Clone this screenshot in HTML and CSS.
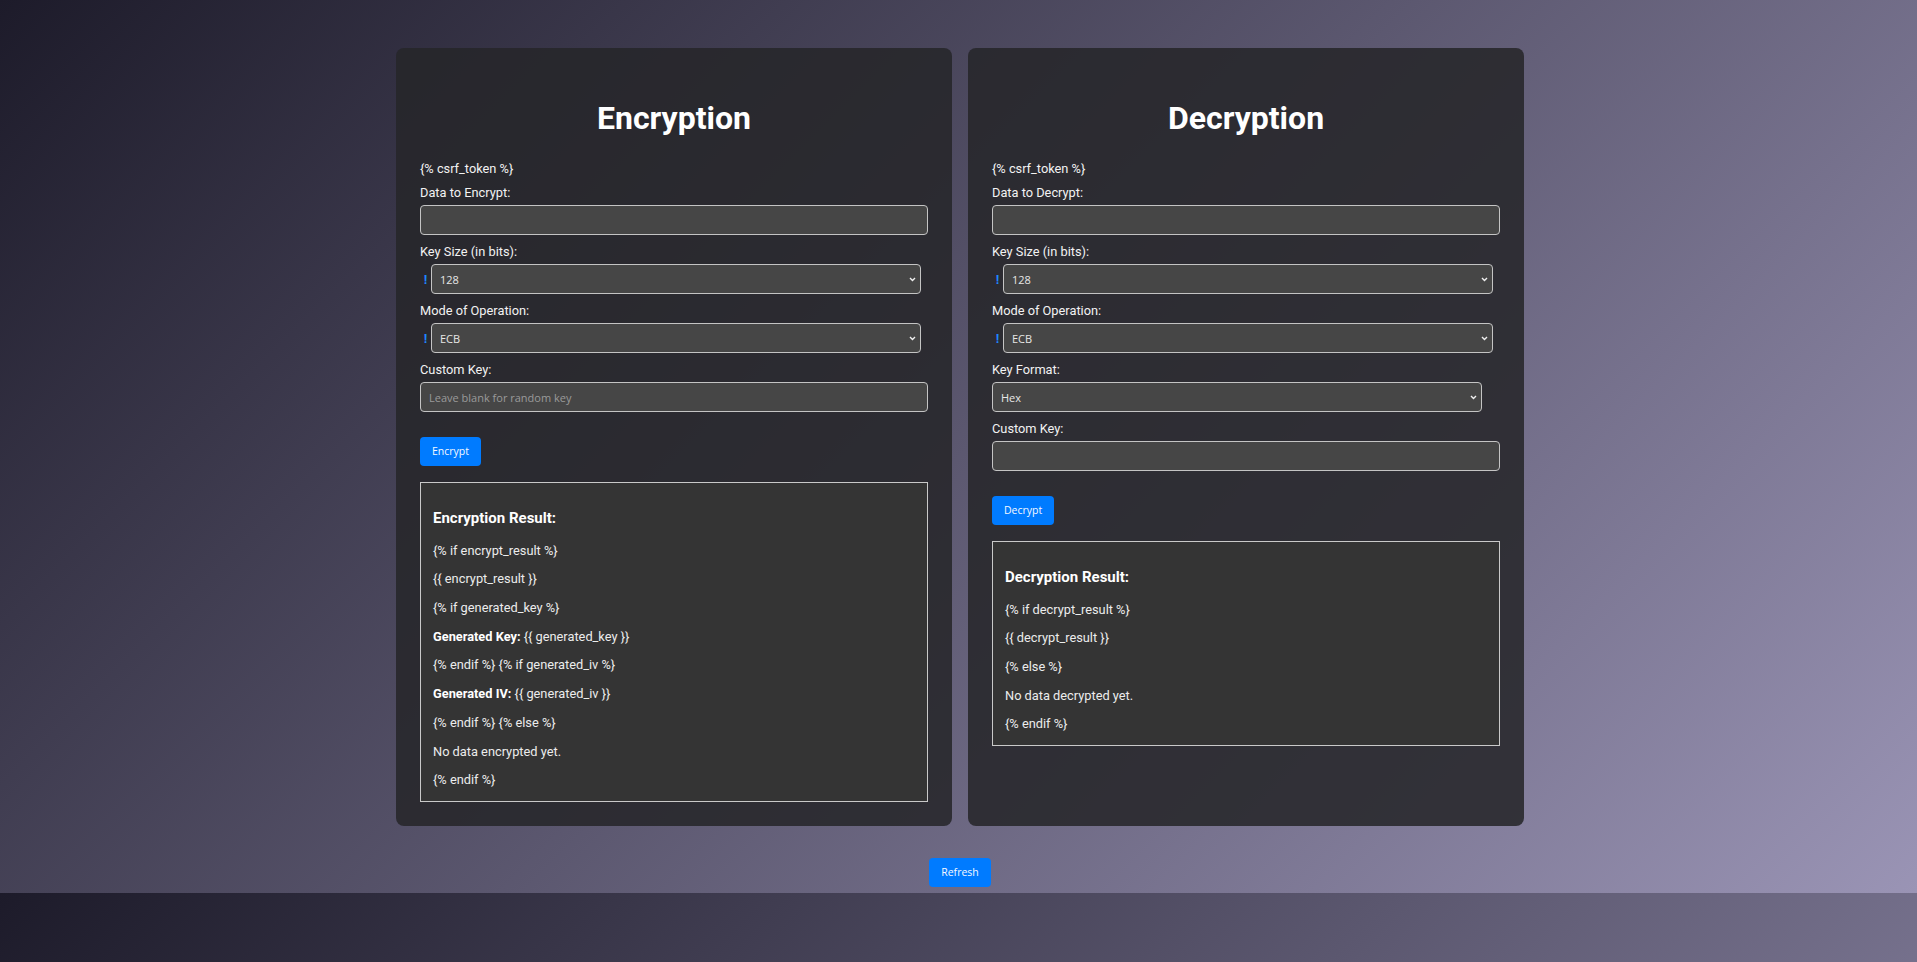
FILE: index.html
```html
<!DOCTYPE html>
<html lang="en">
<head>
<meta charset="utf-8">
<title>AES Encryption / Decryption</title>
<link rel="stylesheet" href="styles.css">
</head>
<body>
<main class="page">
  <div class="cards">
    <section class="card">
      <h1 class="card-title">Encryption</h1>
      <form class="form">
        <div class="csrf">{% csrf_token %}</div>
        <label class="label" for="enc-data">Data to Encrypt:</label>
        <input class="field" id="enc-data" type="text">
        <label class="label" for="enc-size">Key Size (in bits):</label>
        <div class="select-row"><span class="mark">!</span><span class="select-wrap"><select class="field select" id="enc-size"><option>128</option><option>192</option><option>256</option></select><svg class="chevron" width="7" height="5" viewBox="0 0 7 5"><path d="M1 1 L3.5 3.5 L6 1" fill="none" stroke="#f0f0f0" stroke-width="1.4"/></svg></span></div>
        <label class="label" for="enc-mode">Mode of Operation:</label>
        <div class="select-row"><span class="mark">!</span><span class="select-wrap"><select class="field select" id="enc-mode"><option>ECB</option><option>CBC</option><option>CFB</option></select><svg class="chevron" width="7" height="5" viewBox="0 0 7 5"><path d="M1 1 L3.5 3.5 L6 1" fill="none" stroke="#f0f0f0" stroke-width="1.4"/></svg></span></div>
        <label class="label" for="enc-key">Custom Key:</label>
        <input class="field" id="enc-key" type="text" placeholder="Leave blank for random key">
        <button class="btn btn-submit" type="button">Encrypt</button>
      </form>
      <div class="result">
        <h3 class="result-title">Encryption Result:</h3>
        <p>{% if encrypt_result %}</p>
        <p>{{ encrypt_result }}</p>
        <p>{% if generated_key %}</p>
        <p><strong>Generated Key:</strong> {{ generated_key }}</p>
        <p>{% endif %} {% if generated_iv %}</p>
        <p><strong>Generated IV:</strong> {{ generated_iv }}</p>
        <p>{% endif %} {% else %}</p>
        <p>No data encrypted yet.</p>
        <p>{% endif %}</p>
      </div>
    </section>
    <section class="card">
      <h1 class="card-title">Decryption</h1>
      <form class="form">
        <div class="csrf">{% csrf_token %}</div>
        <label class="label" for="dec-data">Data to Decrypt:</label>
        <input class="field" id="dec-data" type="text">
        <label class="label" for="dec-size">Key Size (in bits):</label>
        <div class="select-row"><span class="mark">!</span><span class="select-wrap"><select class="field select" id="dec-size"><option>128</option><option>192</option><option>256</option></select><svg class="chevron" width="7" height="5" viewBox="0 0 7 5"><path d="M1 1 L3.5 3.5 L6 1" fill="none" stroke="#f0f0f0" stroke-width="1.4"/></svg></span></div>
        <label class="label" for="dec-mode">Mode of Operation:</label>
        <div class="select-row"><span class="mark">!</span><span class="select-wrap"><select class="field select" id="dec-mode"><option>ECB</option><option>CBC</option><option>CFB</option></select><svg class="chevron" width="7" height="5" viewBox="0 0 7 5"><path d="M1 1 L3.5 3.5 L6 1" fill="none" stroke="#f0f0f0" stroke-width="1.4"/></svg></span></div>
        <label class="label" for="dec-format">Key Format:</label>
        <span class="select-wrap"><select class="field select" id="dec-format"><option>Hex</option><option>Base64</option></select><svg class="chevron" width="7" height="5" viewBox="0 0 7 5"><path d="M1 1 L3.5 3.5 L6 1" fill="none" stroke="#f0f0f0" stroke-width="1.4"/></svg></span>
        <label class="label" for="dec-key">Custom Key:</label>
        <input class="field" id="dec-key" type="text">
        <button class="btn btn-submit" type="button">Decrypt</button>
      </form>
      <div class="result">
        <h3 class="result-title">Decryption Result:</h3>
        <p>{% if decrypt_result %}</p>
        <p>{{ decrypt_result }}</p>
        <p>{% else %}</p>
        <p>No data decrypted yet.</p>
        <p>{% endif %}</p>
      </div>
    </section>
  </div>
  <button class="btn btn-refresh" type="button">Refresh</button>
</main>
</body>
</html>
```
FILE: styles.css
```css
body {
  margin: 0;
  font-family: Roboto, "Liberation Sans", sans-serif;
  font-size: 12.8px;
  color: #ececec;
  background: linear-gradient(135deg, #1d1b2a 0%, #9a94b5 100%);
}

.page {
  display: flex;
  flex-direction: column;
  align-items: center;
  padding: 48px 0 6px 3px;
}

.cards {
  display: flex;
  gap: 16px;
  align-items: stretch;
}

.card {
  width: 556px;
  box-sizing: border-box;
  padding: 24px;
  border-radius: 8px;
  background: rgba(38, 38, 41, 0.87);
}

.card-title {
  margin: 27px 0 24px;
  font-size: 32px;
  line-height: 38px;
  font-weight: 700;
  text-align: center;
  color: #ffffff;
}

.form {
  display: flex;
  flex-direction: column;
  align-items: flex-start;
}

.csrf {
  line-height: 15px;
  color: #f2f2f2;
}

.label {
  display: block;
  margin: 9px 0 5px;
  line-height: 15px;
  color: #f2f2f2;
}

.field {
  box-sizing: border-box;
  width: 508px;
  height: 30px;
  margin: 0;
  padding: 0 8px;
  border: 1px solid #c4c4c4;
  border-radius: 4px;
  background: #464646;
  color: #e6e6e6;
  font-family: "Open Sans", "DejaVu Sans", sans-serif;
  font-size: 11px;
}

.field::placeholder {
  color: #9a9a9a;
}

.select-wrap {
  position: relative;
  display: block;
}

.select {
  display: block;
  width: 490px;
  padding: 0 20px 0 8px;
  appearance: none;
  -webkit-appearance: none;
}

.chevron {
  position: absolute;
  right: 5px;
  top: 13px;
  pointer-events: none;
}

.select-row {
  display: flex;
  align-items: center;
}

.mark {
  width: 11px;
  text-align: center;
  color: #1f86ff;
  font-size: 13px;
  font-weight: 700;
  line-height: 15px;
}

.btn {
  box-sizing: border-box;
  height: 29px;
  padding: 0 12px;
  border: none;
  border-radius: 4px;
  background: #007bff;
  color: #f4f8ff;
  font-family: "Open Sans", "DejaVu Sans", sans-serif;
  font-size: 10.5px;
  line-height: 29px;
}

.btn-submit {
  margin-top: 25px;
}

.btn-refresh {
  margin-top: 32px;
}

.result {
  margin-top: 16px;
  padding: 12px 12px 0;
  border: 1px solid #c9c9c9;
  background: #343434;
}

.result-title {
  margin: 15px 0 15px;
  font-size: 15px;
  line-height: 17.6px;
  font-weight: 700;
  color: #ffffff;
}

.result p {
  margin: 12.8px 0;
  line-height: 15.9px;
  color: #ececec;
}

.result strong {
  color: #ffffff;
}
```
